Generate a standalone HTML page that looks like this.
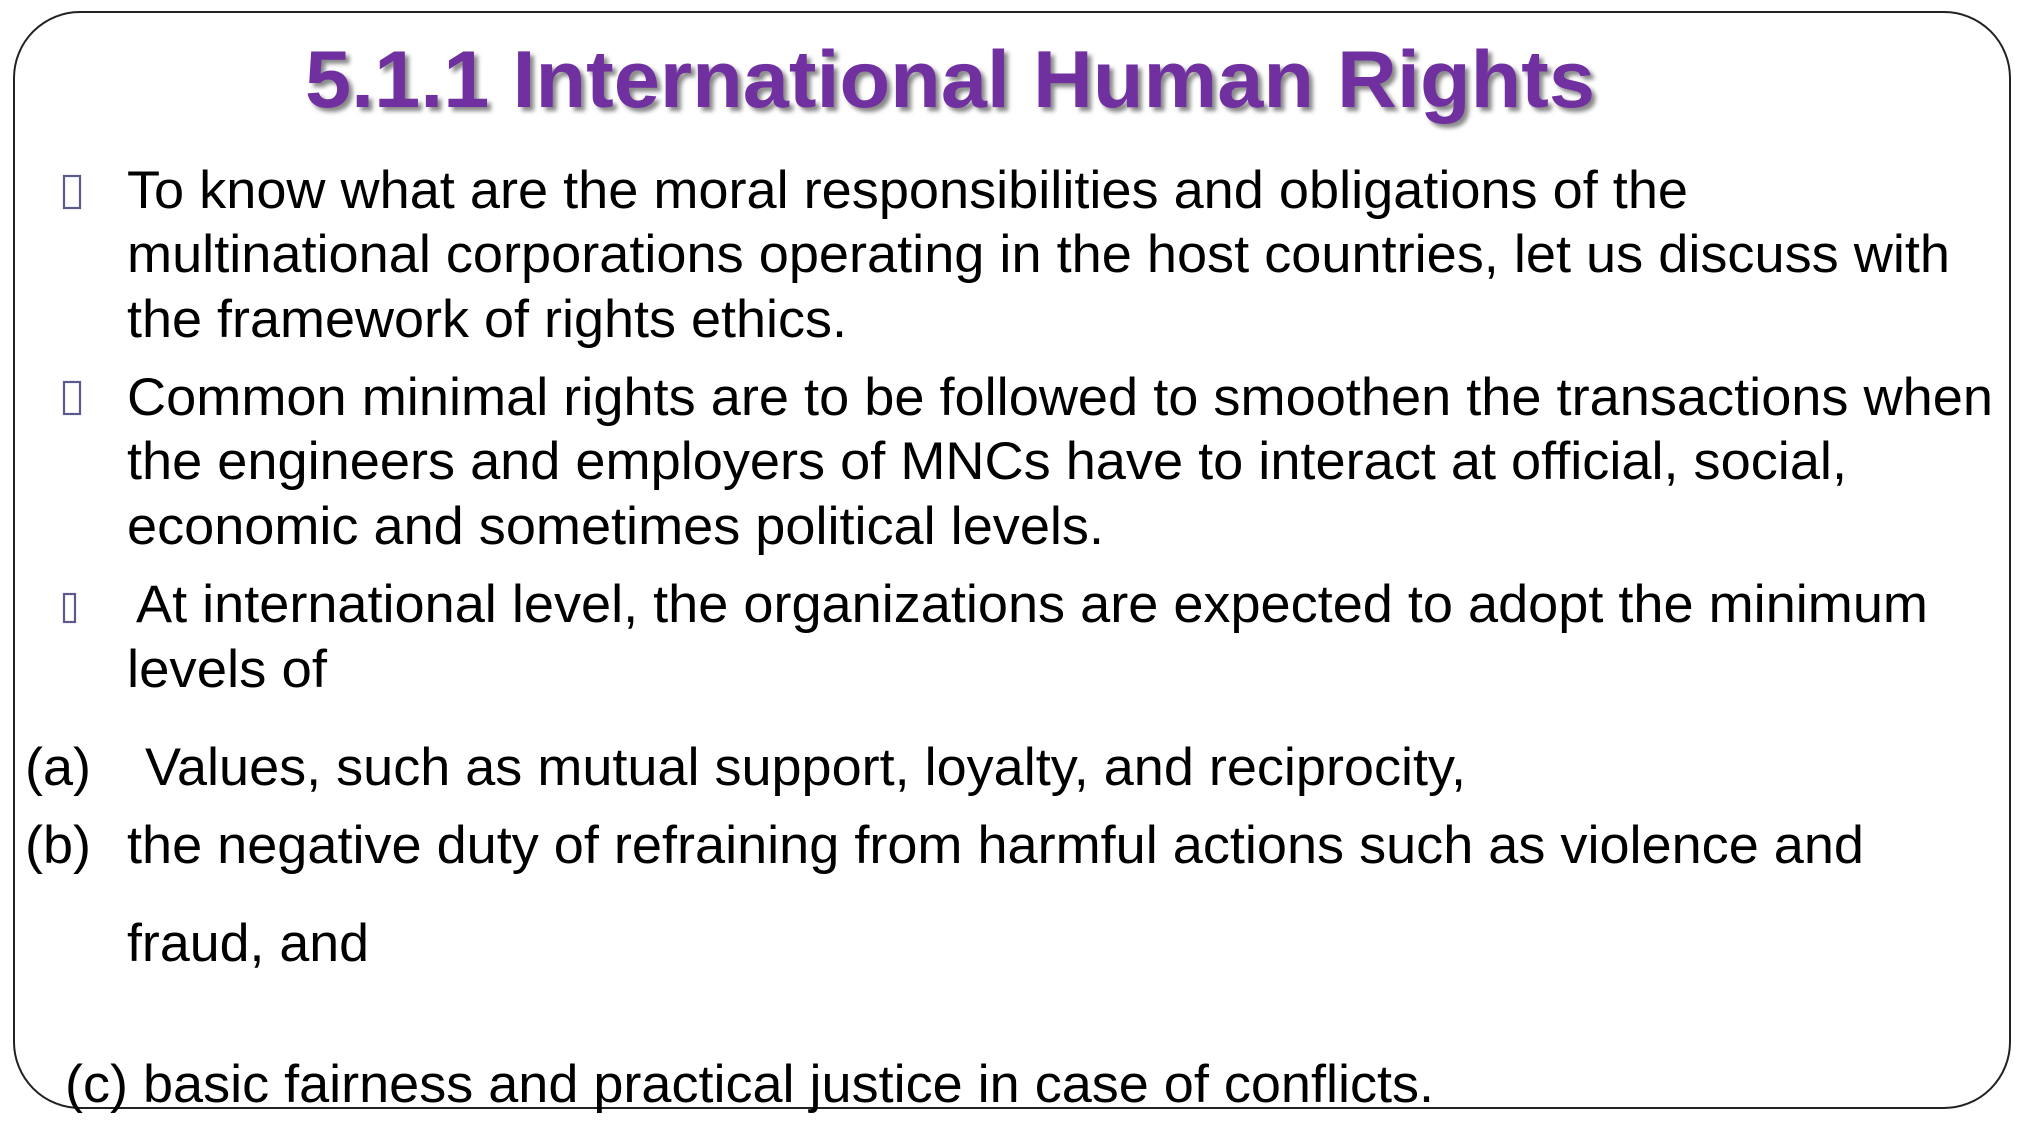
<!DOCTYPE html>
<html><head><meta charset="utf-8"><style>
html,body{margin:0;padding:0;background:#fff;}
svg{display:block}
text{font-family:"Liberation Sans",Arial,sans-serif;}
</style></head><body>
<svg width="2025" height="1125" viewBox="0 0 2025 1125" xmlns="http://www.w3.org/2000/svg">
<defs><filter id="sh" x="-5%" y="-20%" width="110%" height="150%"><feGaussianBlur stdDeviation="2"/></filter></defs>
<rect x="14" y="12" width="1996" height="1096" rx="66" ry="66" fill="#fff" stroke="#222" stroke-width="2"/>
<text x="309" y="111" font-size="81" font-weight="bold" fill="#888" filter="url(#sh)" textLength="1290" lengthAdjust="spacingAndGlyphs">5.1.1 International Human Rights</text>
<text x="305" y="107" font-size="81" font-weight="bold" fill="#7030a0" textLength="1290" lengthAdjust="spacingAndGlyphs">5.1.1 International Human Rights</text>
<g fill="none" stroke="#5a5a8c" stroke-width="2.2">
<rect x="64" y="176" width="16" height="32"/>
<rect x="64" y="382" width="16" height="32"/>
<rect x="64" y="594" width="11" height="28"/>
</g>
<g font-size="53" fill="#000" lengthAdjust="spacingAndGlyphs">
<text x="127" y="208" textLength="1561" lengthAdjust="spacingAndGlyphs">To know what are the moral responsibilities and obligations of the</text>
<text x="127" y="272" textLength="1823" lengthAdjust="spacingAndGlyphs">multinational corporations operating in the host countries, let us discuss with</text>
<text x="127" y="337" textLength="720" lengthAdjust="spacingAndGlyphs">the framework of rights ethics.</text>
<text x="127" y="415" textLength="1866" lengthAdjust="spacingAndGlyphs">Common minimal rights are to be followed to smoothen the transactions when</text>
<text x="127" y="479" textLength="1720" lengthAdjust="spacingAndGlyphs">the engineers and employers of MNCs have to interact at official, social,</text>
<text x="127" y="544" textLength="977" lengthAdjust="spacingAndGlyphs">economic and sometimes political levels.</text>
<text x="136" y="622" textLength="1792" lengthAdjust="spacingAndGlyphs">At international level, the organizations are expected to adopt the minimum</text>
<text x="127" y="687" textLength="200" lengthAdjust="spacingAndGlyphs">levels of</text>
<text x="25" y="785" textLength="66" lengthAdjust="spacingAndGlyphs">(a)</text>
<text x="145" y="785" textLength="1321" lengthAdjust="spacingAndGlyphs">Values, such as mutual support, loyalty, and reciprocity,</text>
<text x="25" y="863" textLength="66" lengthAdjust="spacingAndGlyphs">(b)</text>
<text x="127" y="863" textLength="1737" lengthAdjust="spacingAndGlyphs">the negative duty of refraining from harmful actions such as violence and</text>
<text x="127" y="961" textLength="242" lengthAdjust="spacingAndGlyphs">fraud, and</text>
<text x="65" y="1102" textLength="1369" lengthAdjust="spacingAndGlyphs">(c) basic fairness and practical justice in case of conflicts.</text>
</g>
</svg>
</body></html>
